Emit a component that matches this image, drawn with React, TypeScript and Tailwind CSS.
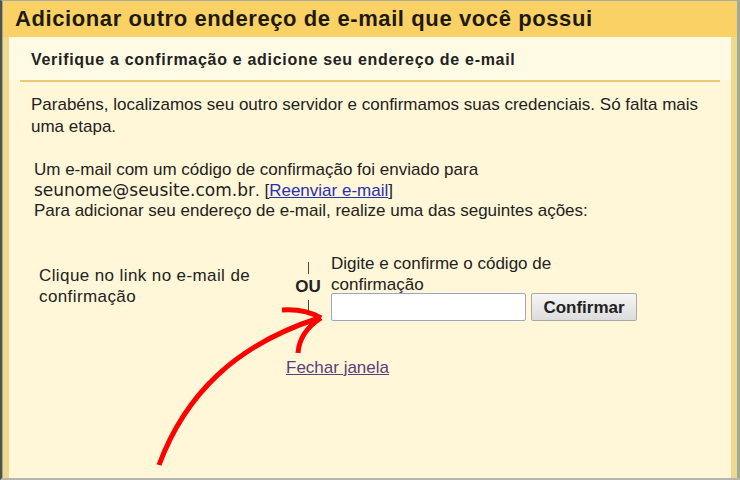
// Diálogo "Adicionar outro endereço de e-mail" — etapa de confirmação do código.

export default function App() {
  return (
    <div className="relative h-[480px] w-[740px] overflow-hidden border-l-2 border-t border-b-2 border-l-[#4d524c] border-t-[#a9aaa6] border-b-[#b4b4b0] bg-[#9fab98] font-['Liberation_Sans',Arial,sans-serif] text-[#222]">
      <div className="ml-px mr-[3px] flex h-full flex-col bg-[#eed98c]">
        {/* cabeçalho */}
        <h1 className="h-[36px] shrink-0 bg-[#fad164] pl-[12px] pt-[5px] text-[22px] font-bold leading-[26px] tracking-[0.6px] text-[#1e1a10]">
          Adicionar outro endereço de e-mail que você possui
        </h1>

        <div className="mx-[6px] flex flex-1 flex-col bg-[#fff7d7]">
          {/* subtítulo */}
          <div className="bg-[#fffae4] px-[22px] pt-[13px] pb-[10px] text-[16px] font-bold leading-[20px] tracking-[0.7px]">
            Verifique a confirmação e adicione seu endereço de e-mail
          </div>
          <div className="mx-[11px] h-[2px] bg-[#ebcb73]" />

          <p className="mt-[12px] pl-[22px] pr-[8px] text-[17px] leading-[22px]">
            Parabéns, localizamos seu outro servidor e confirmamos suas credenciais. Só falta mais uma etapa.
          </p>

          <p className="mt-[22px] pl-[25px] text-[17px] leading-[20px]">
            Um e-mail com um código de confirmação foi enviado para
            <br />
            <span className="font-['DejaVu_Sans',sans-serif] text-[17px]">seunome@seusite.com.br</span>.{' '}
            [<a href="#" className="text-[#2a2fb5] underline">Reenviar e-mail</a>]
            <br />
            Para adicionar seu endereço de e-mail, realize uma das seguintes ações:
          </p>

          {/* opções */}
          <div className="mt-[32px] flex items-center pl-[30px] text-[17px] leading-[21px]">
            <div className="w-[246px] pb-[2px] tracking-[0.4px]">Clique no link no e-mail de confirmação</div>
            <div className="flex w-[46px] flex-col items-center text-center">
              <span className="h-[12px] w-px bg-[#4a4a4a]" />
              <span className="my-[4px] text-[17px] font-bold leading-[18px]">OU</span>
              <span className="h-[12px] w-px bg-[#4a4a4a]" />
            </div>
            <div className="flex flex-col">
              <div className="w-[250px] leading-[21px]">Digite e confirme o código de confirmação</div>
              <div className="mt-[-2px] flex gap-[5px]">
                <input className="h-[28px] w-[195px] rounded-[2px] border border-[#98a8c4] bg-white outline-none" />
                <button className="h-[28px] w-[106px] rounded-[2px] border border-[#a9a9a9] bg-gradient-to-b from-[#f6f6f6] to-[#dcdcdc] text-[17px] font-bold text-[#222]">
                  Confirmar
                </button>
              </div>
            </div>
          </div>

          <div className="mt-[37px] pl-[277px] text-[17px] leading-[20px]">
            <a href="#" className="text-[#5a3f7c] underline">Fechar janela</a>
          </div>
        </div>
      </div>

      {/* seta vermelha de anotação */}
      <svg className="pointer-events-none absolute left-[-2px] top-[-1px]" width="740" height="480" viewBox="0 0 740 480" fill="none">
        <g stroke="#ff0000" strokeWidth="5" strokeLinecap="butt" fill="none">
          <path d="M159 465 C 185 395, 235 345, 319 318" />
          <path d="M282 310 C 298 309, 311 312, 321 318" />
          <path d="M321 318 C 307 327, 299 338, 298 353" />
        </g>
      </svg>
    </div>
  );
}
